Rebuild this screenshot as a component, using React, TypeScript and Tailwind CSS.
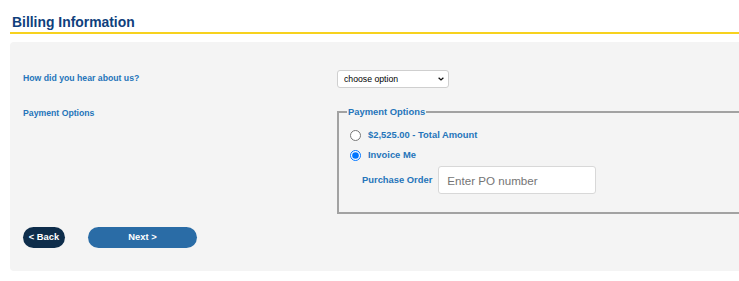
import { useState } from 'react';

export default function App() {
  const [payment, setPayment] = useState('invoice');
  const [po, setPo] = useState('');
  const [source, setSource] = useState('');

  return (
    <div className="w-screen overflow-hidden bg-white font-['Liberation_Sans',Arial,sans-serif]">
      <div className="ml-[10px] w-[1100px]">
        <h2 className="mt-[13px] border-b-2 border-[#f7d21e] pb-px pl-[2px] text-[13.9px] font-bold leading-[18px] text-[#0f3f7c]">
          Billing Information
        </h2>

        <div className="mt-[8px] rounded-[4px] bg-[#f4f4f4] pb-[23px] pl-[13px] pt-[28px]">
          <div className="grid grid-cols-[314px_1fr]">
            <label className="self-center text-[8.7px] font-bold text-[#2575ba]">How did you hear about us?</label>
            <div className="relative h-[18px] w-[112px]">
              <select
                value={source}
                onChange={(e) => setSource(e.target.value)}
                className="block h-[18px] w-full appearance-none rounded-[3px] border border-[#cfcfcf] bg-white pl-[6px] text-[8.7px] leading-[16px] text-black outline-none"
              >
                <option value="">choose option</option>
                <option value="search">Search engine</option>
                <option value="friend">Friend or colleague</option>
                <option value="other">Other</option>
              </select>
              <svg viewBox="0 0 10 6" className="pointer-events-none absolute right-[5px] top-[7px] h-[4px] w-[6px]">
                <path d="M1 1l4 3.6L9 1" fill="none" stroke="#111" strokeWidth="2.2" />
              </svg>
            </div>

            <label className="mt-[19px] text-[8.7px] font-bold leading-[12px] text-[#2575ba]">Payment Options</label>
            <fieldset className="mr-[250px] mt-[18px] border-2 border-solid border-[#a2a2a2] pb-[18px] pl-[8px] pt-[7px]">
              <legend className="px-[1px] text-[9.4px] font-bold leading-[12px] text-[#2575ba]">Payment Options</legend>
              <label className="flex h-[20px] items-center pl-[3px]">
                <input
                  type="radio"
                  name="payment"
                  checked={payment === 'full'}
                  onChange={() => setPayment('full')}
                  className="m-0 h-[11px] w-[11px]"
                />
                <span className="ml-[7px] text-[9.4px] font-bold text-[#2575ba]">$2,525.00 - Total Amount</span>
              </label>
              <label className="flex h-[20px] items-center pl-[3px]">
                <input
                  type="radio"
                  name="payment"
                  checked={payment === 'invoice'}
                  onChange={() => setPayment('invoice')}
                  className="m-0 h-[11px] w-[11px]"
                />
                <span className="ml-[7px] text-[9.4px] font-bold text-[#2575ba]">Invoice Me</span>
              </label>
              <div className="mt-[1px] flex items-center gap-[6px] pl-[15px]">
                <span className="text-[9.4px] font-bold text-[#2575ba]">Purchase Order</span>
                <input
                  value={po}
                  onChange={(e) => setPo(e.target.value)}
                  placeholder="Enter PO number"
                  className="h-[28px] w-[158px] rounded-[3px] border border-[#d8d8d8] bg-white pl-[8px] text-[11.6px] outline-none placeholder:text-[#757575]"
                />
              </div>
            </fieldset>
          </div>

          <div className="mt-[13px] flex gap-[23px]">
            <button className="h-[21px] w-[42px] rounded-full bg-[#0e2d4b] text-[9.4px] font-bold text-white">&lt; Back</button>
            <button className="h-[21px] w-[109px] rounded-full bg-[#2a6ca6] text-[9.4px] font-bold text-white">Next &gt;</button>
          </div>
        </div>
      </div>
    </div>
  );
}
